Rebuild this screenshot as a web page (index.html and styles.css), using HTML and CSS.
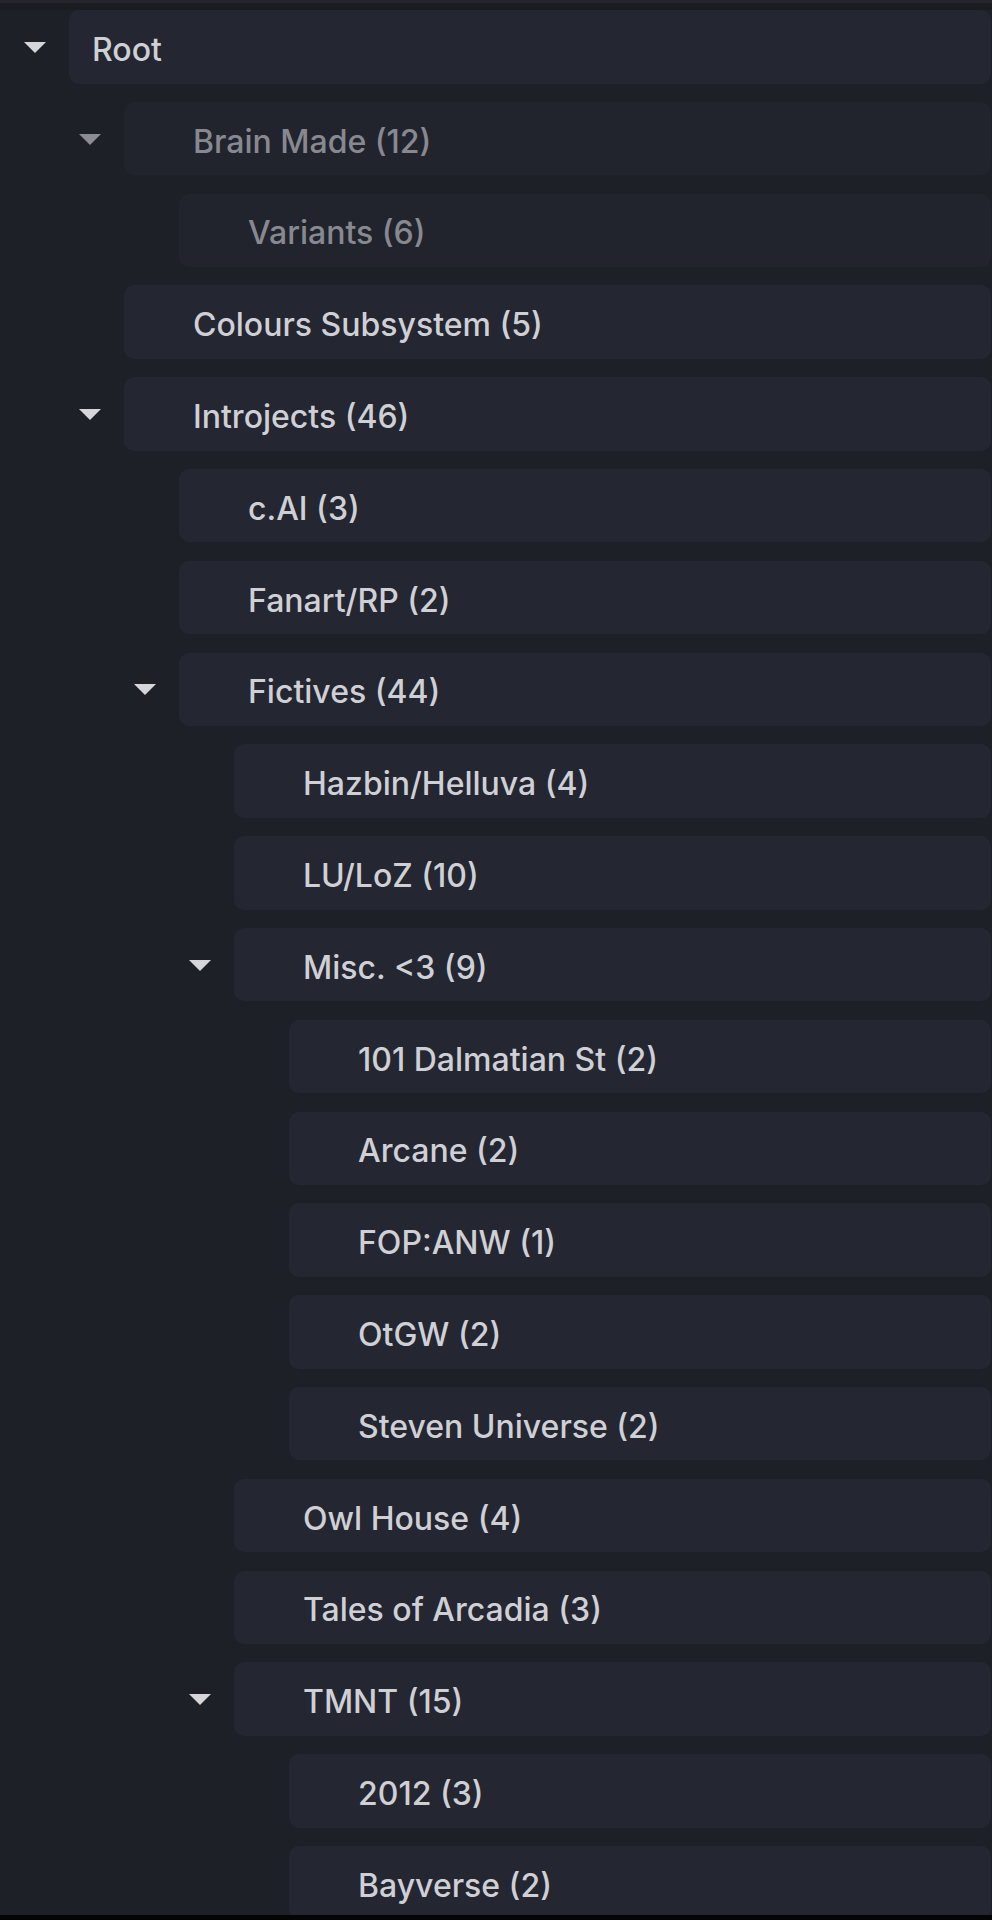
FILE: index.html
```html
<!DOCTYPE html>
<html lang="en">
<head>
<meta charset="utf-8">
<title>Groups</title>
<link rel="stylesheet" href="styles.css">
</head>
<body>
<div class="page">
  <div class="topbar"></div>
  <div class="tree">
    <div class="node">
      <div class="line"><span class="toggle"><span class="caret"></span></span><div class="box root-box">Root</div></div>
      <div class="children">
        <div class="node dim">
          <div class="line"><span class="toggle"><span class="caret"></span></span><div class="box">Brain Made (12)</div></div>
          <div class="children">
            <div class="node"><div class="line"><span class="toggle"></span><div class="box">Variants (6)</div></div></div>
          </div>
        </div>
        <div class="node"><div class="line"><span class="toggle"></span><div class="box">Colours Subsystem (5)</div></div></div>
        <div class="node">
          <div class="line"><span class="toggle"><span class="caret"></span></span><div class="box">Introjects (46)</div></div>
          <div class="children">
            <div class="node"><div class="line"><span class="toggle"></span><div class="box">c.AI (3)</div></div></div>
            <div class="node"><div class="line"><span class="toggle"></span><div class="box">Fanart/RP (2)</div></div></div>
            <div class="node">
              <div class="line"><span class="toggle"><span class="caret"></span></span><div class="box">Fictives (44)</div></div>
              <div class="children">
                <div class="node"><div class="line"><span class="toggle"></span><div class="box">Hazbin/Helluva (4)</div></div></div>
                <div class="node"><div class="line"><span class="toggle"></span><div class="box">LU/LoZ (10)</div></div></div>
                <div class="node">
                  <div class="line"><span class="toggle"><span class="caret"></span></span><div class="box">Misc. &lt;3 (9)</div></div>
                  <div class="children">
                    <div class="node"><div class="line"><span class="toggle"></span><div class="box">101 Dalmatian St (2)</div></div></div>
                    <div class="node"><div class="line"><span class="toggle"></span><div class="box">Arcane (2)</div></div></div>
                    <div class="node"><div class="line"><span class="toggle"></span><div class="box">FOP:ANW (1)</div></div></div>
                    <div class="node"><div class="line"><span class="toggle"></span><div class="box">OtGW (2)</div></div></div>
                    <div class="node"><div class="line"><span class="toggle"></span><div class="box">Steven Universe (2)</div></div></div>
                  </div>
                </div>
                <div class="node"><div class="line"><span class="toggle"></span><div class="box">Owl House (4)</div></div></div>
                <div class="node"><div class="line"><span class="toggle"></span><div class="box">Tales of Arcadia (3)</div></div></div>
                <div class="node">
                  <div class="line"><span class="toggle"><span class="caret"></span></span><div class="box">TMNT (15)</div></div>
                  <div class="children">
                    <div class="node"><div class="line"><span class="toggle"></span><div class="box">2012 (3)</div></div></div>
                    <div class="node"><div class="line"><span class="toggle"></span><div class="box">Bayverse (2)</div></div></div>
                  </div>
                </div>
              </div>
            </div>
          </div>
        </div>
      </div>
    </div>
  </div>
  <div class="bottombar"></div>
</div>
</body>
</html>
```

FILE: styles.css
```css
html, body {
  margin: 0;
  padding: 0;
  background: #1e2028;
}
.page {
  width: 992px;
  height: 1920px;
  display: flex;
  flex-direction: column;
  overflow: hidden;
  font-family: Inter, "Noto Sans", sans-serif;
  font-size: 32px;
  font-weight: 500;
  color: #cfd0d6;
}
.topbar {
  height: 10px;
  flex: none;
  background: #1b1c22;
  border-top: 3px solid #25262d;
  box-sizing: border-box;
}
.tree {
  height: 1905px;
  flex: none;
  overflow: hidden;
}
.bottombar {
  height: 5px;
  flex: none;
  background: #050506;
}
.node {
  display: flex;
  flex-direction: column;
}
.line {
  display: flex;
  align-items: stretch;
  height: 73.5px;
  margin-bottom: 18.3px;
  margin-right: 1px;
}
.toggle {
  width: 69px;
  flex: none;
  display: flex;
  align-items: center;
  justify-content: center;
}
.caret {
  width: 0;
  height: 0;
  border-left: 11.5px solid transparent;
  border-right: 11.5px solid transparent;
  border-top: 11px solid #d6d6da;
  margin-top: 1px;
}
.box {
  flex: 1;
  background: #242631;
  border-radius: 10px;
  display: flex;
  align-items: center;
  box-sizing: border-box;
  padding-left: 69px;
  padding-top: 5px;
  white-space: nowrap;
}
.root-box {
  padding-left: 23px;
}
.children {
  margin-left: 55px;
  display: flex;
  flex-direction: column;
}
.dim {
  opacity: 0.6;
}
```
